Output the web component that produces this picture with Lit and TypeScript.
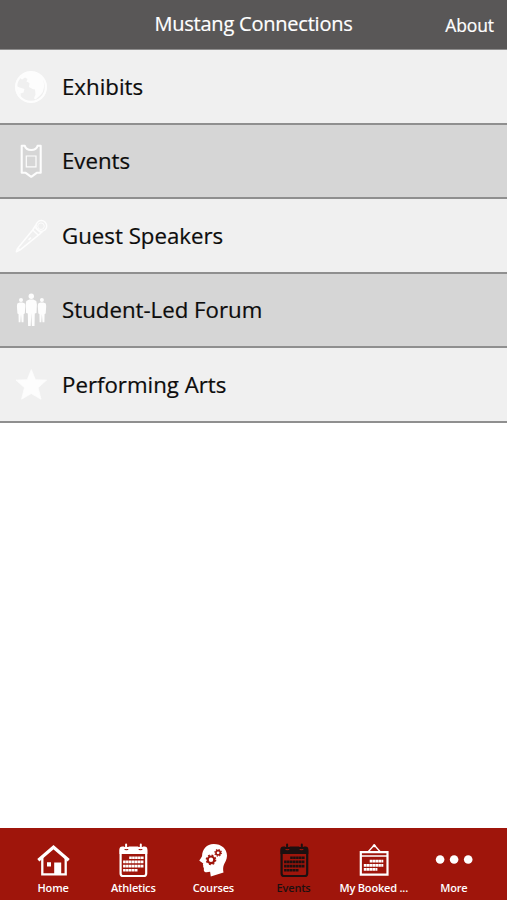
import { LitElement, html, css, svg } from "lit";
import { customElement, property } from "lit/decorators.js";

const sheet = svg`
  <rect x="5.6" y="5" width="25.6" height="28" rx="2.6" fill="none" stroke="currentColor" stroke-width="2.2"/>
  <path d="M4.5 11V6.100q0-2.700 2.700-2.700h2v2q0 1.900 2.200 1.900t2.200-1.900v-2h9.700v2q0 1.900 2.200 1.900t2.200-1.900v-2h1.900q2.700 0 2.700 2.700V11z" fill="currentColor"/>
  <path d="M11.100 1.600v3.600M25.800 1.600v3.600" stroke="currentColor" stroke-width="2" stroke-linecap="round"/>
  <path d="M14.200 14.700h14.600M8.100 18.900h20.700M8.100 23.100h20.700M8.100 27.300h14.600" stroke="currentColor" stroke-width="2.600" stroke-dasharray="2.600 .35"/>`;

const icons: Record<string, unknown> = {
  globe: svg`
    <circle cx="18" cy="18" r="14.900" fill="none" stroke="currentColor" stroke-width="2.300"/>
    <path d="M7 9Q11 3.500 18 3.500q7 0 10.500 4Q31.500 12 31 18q-.5 5-3.500 8l-5 4.500-1.500-1 1.500-4-.5-5-2.500-.5-3.500-2 .5-4-3-1.500 1-2.500-2.500-1.500-3 2zM3.500 17l3 1.500 5 1.500-1 3.500-3 1 .5 3q-4-4-4.500-10.500z" fill="currentColor"/>`,
  ticket: svg`
    <path d="M8.700 2.800v27h4l5.500 4 5.500-4h4v-27h-3.100q-1 4.200-6.400 4.200T11.800 2.800z" fill="none" stroke="currentColor" stroke-width="2.100" stroke-linejoin="round"/>
    <path d="M13.300 13h9.700v10.900h-9.700z" fill="none" stroke="currentColor" stroke-width="1.200"/>`,
  mic: svg`
    <g fill="none" stroke="currentColor" stroke-width="1.500" stroke-linejoin="round">
      <circle cx="28.300" cy="8" r="5.400"/>
      <circle cx="28" cy="8.200" r="3.300" stroke-width="1"/>
      <path d="M22.900 6.800 19.700 12 4.500 30.500 3.300 33.800 7.200 31.800 25.400 17.200 29.600 13.400M19.700 12l5.700 5.200M22.300 9.500l5.500 5.100M4.500 30.500l2.700 1.300M18 19.500l-2.400 2.400"/>
    </g>`,
  people: svg`
    <g fill="currentColor">
      <circle cx="18.300" cy="4.300" r="2.700"/>
      <path d="M16.300 7.600h4l3 1.500.6 3.500-.4 8.500-1.700.3-.3 12.600h-2.600L18.300 21l-.6 13h-2.600l-.3-12.600-1.700-.3-.4-8.500.6-3.500z"/>
      <circle cx="8" cy="8" r="2"/>
      <path d="M6.500 10.500h3l2.400 1.100.4 2.500-.5 7.400-1.100.4-.2 8.400H8.600L8 22l-.6 8.300H5.700l-.2-8.400-1.100-.4-.5-7.400.4-2.500z"/>
      <circle cx="28.900" cy="8" r="2"/>
      <path d="M27.400 10.500h3l2.400 1.100.4 2.500-.5 7.400-1.100.4-.2 8.400h-1.900l-.6-8.300-.6 8.300h-1.700l-.2-8.400-1.100-.4-.5-7.400.4-2.500z"/>
    </g>`,
  star: svg`<path d="m18.300 2.600 4.100 10.200 11.200.3-8.500 7.600 2.900 11.500-9.700-5.600-9.700 5.600 2.900-11.500-8.500-7.600 11.200-.3z" fill="currentColor" stroke="currentColor" stroke-width=".8" stroke-linejoin="round"/>`,
  home: svg`
    <path d="M3.300 17.200 18.500 4.200l15.200 13" fill="none" stroke="currentColor" stroke-width="3.200"/>
    <path d="M7.300 14v17.300h23.400V14" fill="none" stroke="currentColor" stroke-width="2.300"/>
    <path d="M12 19.200h4v4.200h-4zM19.200 19.500h7v12h-7z" fill="currentColor"/>`,
  calendar: sheet,
  head: svg`
    <path fill="currentColor" d="M18.700 1C26.500 1 32 5.800 32 12.700c0 4-2.200 6.800-3.200 9.300-.9 2.400-.8 4.800-.3 7.500L15.800 33.500l-.7-4.700c-3 .5-5.400.8-6.100-.8-.4-1 .2-2.300-.3-3.200-.4-.7-.8-1.400-.3-2.200-.8-.6-.5-1.400-.1-2.200L4.400 17.800c-.3-.8 2-2.800 2.600-4.600C7.400 6 11.500 1 18.700 1z"/>
    <g fill="none" stroke="#9f150b">
      <circle cx="16" cy="16.800" r="3.300" stroke-width="2.200"/>
      <circle cx="16" cy="16.800" r="4.700" stroke-width="1.300" stroke-dasharray="1.850 1.850"/>
      <circle cx="23.100" cy="9.800" r="2.200" stroke-width="1.600"/>
      <circle cx="23.100" cy="9.800" r="3.300" stroke-width="1.100" stroke-dasharray="1.300 1.300"/>
    </g>`,
  board: svg`
    <path d="m12 9 6.200-7 6.200 7" fill="none" stroke="currentColor" stroke-width="1.400"/>
    <circle cx="18.200" cy="2.800" r="1.500" fill="currentColor"/>
    <path d="M4.800 9.100h26.700v22.500H4.800z" fill="none" stroke="currentColor" stroke-width="2.200"/>
    <path d="M5 13h26" stroke="currentColor" stroke-width="1.500"/>
    <path d="M13.700 18.200h13.600M7.800 22.300h19.500M7.800 26.400h13.600" stroke="currentColor" stroke-width="2.700" stroke-dasharray="2.600 .3"/>`,
  dots: svg`<g fill="currentColor"><circle cx="4.100" cy="16.500" r="4.300"/><circle cx="18.100" cy="16.500" r="4.300"/><circle cx="32.200" cy="16.500" r="4.300"/></g>`,
};

@customElement("app-icon")
class AppIcon extends LitElement {
  @property() name = "";
  static styles = css`
    :host { display: block; width: 36px; height: 36px; flex: none; }
    svg { display: block; overflow: visible; }
  `;
  render() {
    return html`<svg width="36" height="36" viewBox="0 0 36 36" aria-hidden="true">${icons[this.name]}</svg>`;
  }
}

@customElement("app-root")
class AppRoot extends LitElement {
  static styles = css`
    :host {
      display: flex; flex-direction: column; height: 900px; background: #fff;
      font-family: "Open Sans", "Noto Sans", sans-serif; color: #0c0c0c; overflow: hidden;
    }
    header {
      display: grid; grid-template-columns: 1fr auto 1fr; box-sizing: border-box;
      height: 50px; flex: none; background: #595757; color: #fff; border-bottom: 1px solid #8e8d8d;
    }
    .title { grid-column: 2; font-size: 20px; letter-spacing: -0.22px; line-height: 47px; white-space: nowrap; -webkit-text-stroke: 0.2px; }
    .about { justify-self: end; font-size: 17.500px; letter-spacing: -0.1px; line-height: 50px; padding-right: 13px; -webkit-text-stroke: 0.2px; }
    ul { margin: 0; padding: 0; list-style: none; }
    .row {
      display: flex; align-items: center; gap: 13px; height: 74.500px; box-sizing: border-box;
      padding: 1px 0 0 13px; background: #f0f0f0; border-bottom: 2px solid #8f8f8f; font-size: 22.250px;
      -webkit-text-stroke: 0.2px;
    }
    .row:nth-child(even) { background: #d6d6d6; }
    .row app-icon { color: #fdfdfd; }
    .label { line-height: 30px; }
    nav {
      display: grid; grid-template-columns: repeat(6, 1fr); margin-top: auto; height: 72px;
      box-sizing: border-box; padding: 15px 13px 0; background: #9f150b; color: #fff;
    }
    .tab { display: flex; flex-direction: column; align-items: center; font-size: 11px; font-weight: 600; letter-spacing: -0.18px; line-height: 18px; white-space: nowrap; }
    .active { color: #1d1010; }
  `;
  private rows = [
    ["globe", "Exhibits"], ["ticket", "Events"], ["mic", "Guest Speakers"],
    ["people", "Student-Led Forum"], ["star", "Performing Arts"],
  ];
  private tabs = [
    ["home", "Home"], ["calendar", "Athletics"], ["head", "Courses"],
    ["calendar", "Events"], ["board", "My Booked ..."], ["dots", "More"],
  ];
  render() {
    return html`
      <header><span class="title">Mustang Connections</span><span class="about">About</span></header>
      <ul>${this.rows.map(([icon, label]) => html`<li class="row"><app-icon name=${icon}></app-icon><span class="label">${label}</span></li>`)}</ul>
      <nav>${this.tabs.map(([icon, label], i) => html`<div class="tab ${i === 3 ? "active" : ""}"><app-icon name=${icon}></app-icon><span>${label}</span></div>`)}</nav>
    `;
  }
}
